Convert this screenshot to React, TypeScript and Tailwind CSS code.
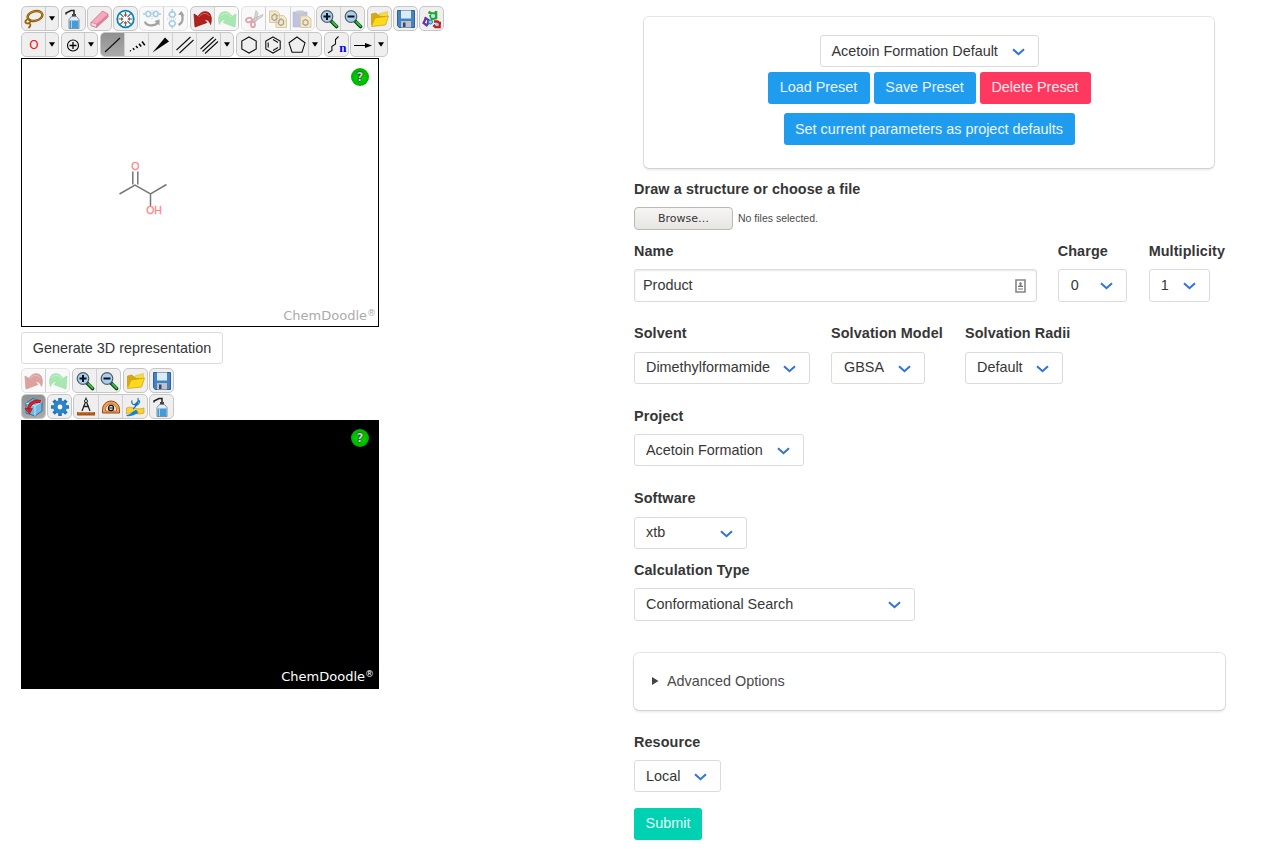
import type { ReactNode } from "react";

type Kids = { children?: ReactNode };

function Svg({ children, dim }: Kids & { dim?: boolean }) {
  return (
    <svg viewBox="0 0 20 20" width="20" height="20" fill="none" className={dim ? "opacity-40" : ""}>
      {children}
    </svg>
  );
}

const Lasso = () => (
  <Svg>
    <ellipse cx="11" cy="7" rx="7.500" ry="4.800" transform="rotate(-14 11 7)" stroke="#7a4a00" strokeWidth="2.300" />
    <ellipse cx="11" cy="7" rx="7.500" ry="4.800" transform="rotate(-14 11 7)" stroke="#c58a1c" strokeWidth="1" />
    <path d="M4.500 10c-4 1-4 4.500-1 4.500s4-3 1.500-4.500M5 14c2 1 2 3-.5 5" stroke="#9a620a" strokeWidth="1.800" />
  </Svg>
);
const Bottle = () => (
  <Svg>
    <path d="M2 5.500V4l5-2.500h3V6" stroke="#222" strokeWidth="1.500" />
    <path d="M8 5h4v2.500H8z" fill="#444" />
    <path d="M7.500 7.500h5l2.500 3v9H5v-9z" fill="#e4edf3" stroke="#667a88" strokeWidth=".8" />
    <path d="M5.500 11.500h9V19h-9z" fill="#459bd8" />
    <path d="M7.500 11.500V19" stroke="#a5d4f2" />
  </Svg>
);
const Eraser = () => (
  <Svg>
    <path d="M1 13.500 12.500 2 18 5v3L6.500 18.500 1 16.500z" fill="#f6a8bf" stroke="#c56680" strokeWidth=".7" />
    <path d="M6.500 15 18 5v3L6.500 18.500z" fill="#e27f9b" />
    <path d="M1 13.500 6.500 15v3.500L1 16.500z" fill="#f8d8e2" stroke="#c56680" strokeWidth=".5" />
  </Svg>
);
const Center = () => (
  <Svg>
    <circle cx="9.500" cy="10" r="8.300" stroke="#117fae" strokeWidth="1.700" fill="#f6fcfd" />
    <path d="M9.500 3v4M9.500 13v4M2.500 10h4M12.500 10h4" stroke="#278655" strokeWidth="1.200" />
    <path d="m4 4.500 3.500 3.500m4 4 3.500 3.500m0-11L11.500 8m-4 4L4 15.500" stroke="#27828c" strokeWidth="1.100" />
    <path d="M7.500 5.500 9.500 8l2-2.500zM7.500 14.500l2-2.500 2 2.500zM5 8l2.500 2L5 12zM14 8l-2.500 2 2.500 2z" fill="#d43b38" />
  </Svg>
);
const FlipH = () => (
  <Svg dim>
    <path d="m3.500 5 1.500-2.500h2.500L9 5 7.500 7.500H5zM11 5l1.500-2.500H15L16.500 5 15 7.500h-2.500zM1 5h2.500m13 0H19" stroke="#268bc5" strokeWidth="1.500" />
    <path d="M10 1v9" stroke="#777" strokeDasharray="1 1" />
    <path d="M3 12.500c1 4.500 9 5.500 13 1" stroke="#222" strokeWidth="2.200" />
    <path d="m12.500 12 5-1.500v6z" fill="#222" />
  </Svg>
);
const FlipV = () => (
  <Svg dim>
    <path d="M4.500 3h3.500l1.500 2.500L8 8H4.500L3 5.500zm0 9h3.500l1.500 2.500L8 17H4.500L3 14.500zM6.200 0v3m0 14v2.500" stroke="#268bc5" strokeWidth="1.500" />
    <path d="M1 10h10" stroke="#888" strokeDasharray="1 1" />
    <path d="M12.500 16c4.500-2 5-7 3-11.500" stroke="#222" strokeWidth="2.200" />
    <path d="m12 5.500 3.500-3.500 3 5z" fill="#222" />
  </Svg>
);
const Undo = ({ dim }: { dim?: boolean }) => (
  <Svg dim={dim}>
    <path d="M1 5 5 7.500C8 1.500 14.500 1.500 17 5c2 3.500 1.500 7.500.5 10.500-1-3.500-3.500-5.500-6-4.500l2.500 2.500L2 18z" fill="#b4201b" stroke="#7f100d" strokeWidth=".7" />
    <path d="M6 8c2-4 7.500-5 10.500-1" stroke="#df675b" />
  </Svg>
);
const Redo = () => (
  <Svg dim>
    <path d="M19 5 15 7.500C12 1.500 5.500 1.500 3 5c-2 3.500-1.500 7.500-.5 10.500 1-3.500 3.500-5.500 6-4.500L6 13.500 18 18z" fill="#2bcf42" stroke="#18aa35" strokeWidth=".7" />
    <path d="M14 8C12 4 6.500 3 3.500 7" stroke="#86e891" />
  </Svg>
);
const Cut = () => (
  <Svg dim>
    <path d="m12 1.500-2 9.500 2 1.500L14 4zM19 5.500 8 10.500l2 2.500 8-5z" fill="#aaa" stroke="#555" strokeWidth=".7" />
    <ellipse cx="5" cy="11" rx="3" ry="2.200" transform="rotate(-15 5 11)" stroke="#b52b45" strokeWidth="1.900" />
    <ellipse cx="9" cy="15.500" rx="2" ry="2.700" stroke="#b52b45" strokeWidth="1.900" />
  </Svg>
);
const Copy = () => (
  <Svg dim>
    <path d="M1.500 2h7l3 2.500v9h-10zM8 6.500h7.500l3 3v9H8z" fill="#f1ce68" stroke="#aa872f" />
    <path d="m4 7 2.500-2L9 6.500V10l-2.500 1.500L4 10zm6.500 5 2.500-2 2.500 1.500V15L13 16.500 10.500 15z" stroke="#222" strokeWidth="1.200" />
  </Svg>
);
const Paste = () => (
  <Svg dim>
    <path d="M1 3h14v15H1z" fill="#6970bd" stroke="#4c52a0" strokeWidth=".6" />
    <path d="M4.500 1.500h7V5h-7z" fill="#888" />
    <path d="M8.500 7H16l3 3v8.500H8.500z" fill="#f1ce68" stroke="#aa872f" />
    <path d="m11 12 2.500-1.500L16 12v3l-2.500 1.500L11 15z" stroke="#222" strokeWidth="1.200" />
  </Svg>
);
const Zoom = ({ plus }: { plus?: boolean }) => (
  <Svg>
    <path d="m12 12 5.500 5.500" stroke="#093e0d" strokeWidth="3.600" strokeLinecap="round" />
    <path d="m13.500 13 4 4" stroke="#31be43" strokeWidth="2" strokeLinecap="round" />
    <circle cx="8" cy="7.500" r="5.800" fill="#a8cfee" stroke="#555e66" strokeWidth="1.200" />
    <path d={plus ? "M4.500 7.500h7M8 4v7" : "M4.500 7.500h7"} stroke="#04101c" strokeWidth="2" />
  </Svg>
);
const Folder = () => (
  <Svg>
    <path d="M1.500 16V5L6 4l2 2h7v4" fill="#d7a90b" stroke="#b98d05" strokeWidth=".6" />
    <path d="M9.500 7V4.500l8-2V7" fill="#f5d94c" stroke="#d8ba45" strokeWidth=".5" />
    <path d="m1.500 17.500 3.500-8.500 13.500-2L15.500 16z" fill="#ffd91b" stroke="#c69c0a" strokeWidth=".7" />
  </Svg>
);
const Save = () => (
  <Svg>
    <path d="M1.500 1.500h17v17H3l-1.500-2z" fill="#4084c6" stroke="#244777" strokeWidth=".8" />
    <path d="M5 1.500h10v8H5z" fill="#dcecf4" />
    <path d="M5 12h10v6.500H5z" fill="#c2c2c2" />
    <path d="M7 13.500h2.500v4.500H7z" fill="#244b7b" />
  </Svg>
);
const Molecules = () => (
  <Svg>
    <path d="m6.500 3 3 1.500H14V2M14 4.500V9l-4 1-2-4" stroke="#24a82b" strokeWidth="2.600" />
    <path d="m2.500 8.500 4 2.500-1 5m-2-6-2 4 4 3" stroke="#6334ae" strokeWidth="2.200" />
    <path d="M12 12.500h3.500l2 2V18h-4l-2-2M17 14h2" stroke="#c51e22" strokeWidth="2.600" />
    <circle cx="11" cy="7" r="2" fill="#b7e6f6" /><circle cx="8.500" cy="13" r="2" fill="#8ed0ef" stroke="#1587bd" /><circle cx="15" cy="15.500" r="1.800" fill="#8ed0ef" />
  </Svg>
);
const Plus = () => (
  <Svg><circle cx="10" cy="10.500" r="5.500" stroke="#000" strokeWidth="1.100" /><path d="M10 7v7M6.500 10.500h7" stroke="#000" strokeWidth="1.300" /></Svg>
);
const Bond = () => <Svg><path d="M2 17 17 3" stroke="#111" strokeWidth="1.100" /></Svg>;
const Dashed = () => (
  <Svg><path d="m3 15.500.8.8m2.200-3 1.300 1.500m1.700-3.800 1.700 2m1.300-4.200 2.200 2.700m.8-5 2.800 3.800" stroke="#000" strokeWidth="1.500" /></Svg>
);
const Wedge = () => <Svg><path d="m1.500 17.500 12.500-15 4 4z" fill="#000" /></Svg>;
const Double = () => <Svg><path d="M1.500 15 15.500 2M4.500 18 18.500 5" stroke="#111" strokeWidth="1.100" /></Svg>;
const Triple = () => <Svg><path d="M1.500 14 14.500 2M3.500 16.500 17 4M6 18.500 19 6.500" stroke="#111" strokeWidth="1.100" /></Svg>;
const Hexagon = () => <Svg><path d="m10 2 7.200 4v8L10 18l-7.200-4V6z" stroke="#111" strokeWidth="1.100" /></Svg>;
const Benzene = () => (
  <Svg><path d="m10 2 7.200 4v8L10 18l-7.200-4V6zM10 4.600l5 2.800M15 12.600l-5 2.800M5.200 12.600V7.400" stroke="#111" strokeWidth="1.100" /></Svg>
);
const Pentagon = () => <Svg><path d="m10 2 8 5.800-3 9.400H5L2 7.800z" stroke="#111" strokeWidth="1.100" /></Svg>;
const Arrow = () => <Svg><path d="M1 10.500h12" stroke="#000" strokeWidth="1.200" /><path d="m12 8 7 2.500-7 2.500z" fill="#000" /></Svg>;
const Chain = () => (
  <span className="relative block h-5 w-5">
    <Svg><path d="m1 18 4-2.500-.2-4L8.500 9V4.500l3-3" stroke="#111" strokeWidth="1.100" /></Svg>
    <b className="absolute right-0 bottom-0 font-['Liberation_Serif',serif] text-[13px] leading-[14px] text-[#0000ff]">n</b>
  </span>
);
const Rotate = () => (
  <Svg>
    <path d="m2 6 7-4.500 9 3V14l-7 5-9-3z" fill="#73b8df" stroke="#2672a8" />
    <path d="m2 6 9 3 7-4.500M11 9v10" stroke="#bde6fa" />
    <path d="M4.500 13C5 7 9 3.500 16.500 4.500" stroke="#931319" strokeWidth="3.200" />
    <path d="M4.500 13C5 7 9 3.500 16.500 4.500" stroke="#e8191b" strokeWidth="2.200" />
    <path d="M1 11.500h7.500L5.500 17z" fill="#d91e22" stroke="#8d1418" strokeWidth=".5" />
  </Svg>
);
const Gear = () => (
  <Svg>
    <path d="M10 1v18M1 10h18M3.600 3.600l12.800 12.800m0-12.800L3.600 16.400" stroke="#2176ba" strokeWidth="3.600" />
    <circle cx="10" cy="10" r="6.800" fill="#2c83c5" />
    <circle cx="10" cy="10" r="2.400" fill="#fff" />
  </Svg>
);
const Compass = () => (
  <Svg>
    <path d="M10 .5V3M9.500 5 6 14m4.500-9L14 14M7 9.500h6" stroke="#222" strokeWidth="1.300" />
    <circle cx="10" cy="4" r="1.500" fill="#fff" stroke="#222" />
    <path d="M1 15h18v3.500H1z" fill="#a6551d" />
    <path d="M3 15v1.500m2-1.500v1m2-1v1.500m2-1.500v1m2-1v1.500m2-1.500v1m2-1v1.500m2-1.500v1" stroke="#ffcf68" strokeWidth=".7" />
  </Svg>
);
const Protractor = () => (
  <Svg>
    <path d="M1.500 16v-3.500a8.500 8.500 0 0 1 17 0V16z" fill="#eda15a" stroke="#974713" />
    <path d="M4.500 14v-1.500a5.500 5.500 0 0 1 11 0V14z" fill="#fff2d8" stroke="#974713" strokeWidth=".7" />
    <ellipse cx="10" cy="11" rx="2.600" ry="2.700" stroke="#111" strokeWidth="1.200" /><path d="M8 11h4" stroke="#111" />
  </Svg>
);
const Torsion = () => (
  <Svg>
    <path d="M1.500 11c5-3 8 3 17.500 0v5c-8 3-11-2-17.500 1z" fill="#ffd129" stroke="#b08a0d" strokeWidth=".5" />
    <path d="M1.500 18c4 0 7-5 10-5l2 3c-3 1-7 4-12 3z" fill="#1681cf" />
    <path d="M8 12c3-2 6-8 5-11M7 3.500c-1 4 2 5 4 3s4-4 3.500-1.500-3 3.500-5 3" stroke="#1673b8" strokeWidth="1.200" />
  </Svg>
);
const OxygenLabel = () => <span className="block pl-px font-['DejaVu_Sans',sans-serif] text-[12px] leading-[22px] text-[#ff0d0d]">O</span>;

function Caret() {
  return (
    <span className="flex h-full w-[13px] shrink-0 items-center justify-center border-l border-[#c9c9c9]">
      <svg width="6" height="5" viewBox="0 0 6 5"><path d="M0 .3h6L3 4.700z" fill="#000" /></svg>
    </span>
  );
}

type GroupProps = { icons: ReactNode[]; width: string; caret?: boolean; faded?: boolean; fadedRest?: boolean; active?: boolean };

function Group({ icons, width, caret, faded, fadedRest, active }: GroupProps) {
  return (
    <div className={`flex h-[25px] shrink-0 overflow-hidden rounded-[5px] border ${faded ? "border-[#e3e3e3] bg-[#f9f9f9]" : "border-[#c6c6c6] bg-[#efefef]"} ${width}`}>
      {icons.map((icon, i) => (
        <span
          key={i}
          className={`flex h-full min-w-0 flex-1 items-center justify-center ${i ? "border-l border-[#d0d0d0]" : ""} ${fadedRest && i ? "bg-[#f9f9f9]" : ""} ${active && i === 0 ? "bg-linear-to-b from-[#909090] to-[#ababab]" : ""}`}
        >
          <span className="-mx-1 shrink-0">{icon}</span>
        </span>
      ))}
      {caret && <Caret />}
    </div>
  );
}

function Help({ className }: { className: string }) {
  return (
    <span className={`absolute top-[9px] flex h-[18px] w-[18px] items-center justify-center rounded-full bg-radial from-[#00f000] to-[#009400] font-['DejaVu_Sans',sans-serif] text-[12px] font-bold text-[#d0d0d0] [text-shadow:0_0_1px_#000,0_0_2px_#000] ${className}`}>
      ?
    </span>
  );
}

function Brand({ className }: { className: string }) {
  return (
    <span className={`absolute font-['DejaVu_Sans',sans-serif] text-[13px] leading-4 ${className}`}>
      ChemDoodle<span className="relative -top-[4px] text-[9px]">®</span>
    </span>
  );
}

function Sketch() {
  return (
    <svg width="100" height="80" viewBox="100 150 100 80" className="absolute top-[91px] left-[78px]">
      <path d="M119.500 194 135 185l15.500 9 16-9.500M150.500 194v12M132.800 184.500v-13m5 13v-13" stroke="#777" strokeWidth="1.500" fill="none" />
      <g fill="#ff8585" fontFamily="Liberation Sans, sans-serif" fontSize="10.500" stroke="#ff8585" strokeWidth=".3">
        <text x="131.200" y="170">O</text>
        <text x="146.200" y="214.300">OH</text>
      </g>
    </svg>
  );
}

function Label({ children, className = "" }: Kids & { className?: string }) {
  return <div className={`h-[22px] text-[14.400px] leading-[22px] font-bold tracking-[0.1px] whitespace-nowrap text-[#363636] ${className}`}>{children}</div>;
}

function Select({ children, className, raised }: Kids & { className: string; raised?: boolean }) {
  return (
    <div className={`flex shrink-0 items-center justify-between rounded-[3px] border border-[#dbdbdb] bg-white pr-[13px] pl-[11px] text-[14.400px] leading-[22px] whitespace-nowrap text-[#363636] ${className}`}>
      <span className={raised ? "pb-0.5" : ""}>{children}</span>
      <svg width="13" height="8" viewBox="0 0 13 8" className="relative top-[0.500px]"><path d="m1 1.200 5.500 5 5.500-5" fill="none" stroke="#3273dc" strokeWidth="2.100" /></svg>
    </div>
  );
}

function Button({ children, className }: Kids & { className: string }) {
  return (
    <button className={`h-8 shrink-0 rounded-[3px] text-[14.400px] leading-[30px] whitespace-nowrap ${className}`}>{children}</button>
  );
}

const box = "rounded-[5px] bg-white shadow-[0_2px_3px_rgba(10,10,10,0.1),0_0_0_1px_rgba(10,10,10,0.1)]";
const blue = "bg-[#209cee] text-white/90";

export default function App() {
  return (
    <div className="flex h-[864px] w-[1275px] overflow-hidden bg-white font-['Liberation_Sans',Arial,sans-serif]">
      <section className="w-[634px] shrink-0 pt-1.5 pl-[21px]">
        <div className="flex">
          <Group icons={[<Lasso />]} width="w-[38px] mr-0.5" caret />
          <Group icons={[<Bottle />]} width="w-[25px] mr-px" />
          <Group icons={[<Eraser />]} width="w-[25px] mr-px" />
          <Group icons={[<Center />]} width="w-[25px] mr-px" />
          <Group icons={[<FlipH />, <FlipV />]} width="w-[49px] mr-0.5" faded />
          <Group icons={[<Undo />, <Redo />]} width="w-[49px] mr-0.5" fadedRest />
          <Group icons={[<Cut />, <Copy />, <Paste />]} width="w-[74px] mr-px" faded />
          <Group icons={[<Zoom plus />, <Zoom />]} width="w-[49px] mr-0.5" />
          <Group icons={[<Folder />]} width="w-[25px] mr-px" />
          <Group icons={[<Save />]} width="w-[25px] mr-px" />
          <Group icons={[<Molecules />]} width="w-[25px]" />
        </div>
        <div className="mt-px flex">
          <Group icons={[<OxygenLabel />]} width="w-[38px] mr-0.5" caret />
          <Group icons={[<Plus />]} width="w-[37px] mr-0.5" caret />
          <Group icons={[<Bond />, <Dashed />, <Wedge />, <Double />, <Triple />]} width="w-[134px] mr-0.5" caret active />
          <Group icons={[<Hexagon />, <Benzene />, <Pentagon />]} width="w-[86px] mr-0.5" caret />
          <Group icons={[<Chain />]} width="w-[25px] mr-px" />
          <Group icons={[<Arrow />]} width="w-[38px]" caret />
        </div>
        <div className="relative mt-px h-[269px] w-[358px] border border-black bg-white">
          <Sketch />
          <Help className="left-[329px]" />
          <Brand className="right-[2px] bottom-px text-[#ababab]" />
        </div>
        <Button className="mt-[5px] block w-[202px] border border-[#dbdbdb] bg-white pb-0.5 leading-[28px] text-[#363636]">Generate 3D representation</Button>
        <div className="mt-1 flex">
          <Group icons={[<Undo dim />, <Redo />]} width="w-[49px] mr-0.5" faded />
          <Group icons={[<Zoom plus />, <Zoom />]} width="w-[49px] mr-0.5" />
          <Group icons={[<Folder />]} width="w-[25px] mr-px" />
          <Group icons={[<Save />]} width="w-[25px]" />
        </div>
        <div className="mt-px flex">
          <Group icons={[<Rotate />]} width="w-[25px] mr-px" active />
          <Group icons={[<Gear />]} width="w-[25px] mr-px" />
          <Group icons={[<Compass />, <Protractor />, <Torsion />]} width="w-[75px] mr-px" />
          <Group icons={[<Bottle />]} width="w-[25px]" />
        </div>
        <div className="relative mt-px h-[269px] w-[358px] bg-black">
          <Help className="left-[330px]" />
          <Brand className="right-[5px] bottom-[3px] text-white" />
        </div>
      </section>

      <section className="w-[591px] shrink-0 pt-[17px]">
        <div className={`ml-2.5 flex h-[151px] w-[570px] flex-col items-center pt-[18px] ${box}`}>
          <Select className="h-8 w-[219px]">Acetoin Formation Default</Select>
          <div className="mt-[5px] flex gap-1">
            <Button className={`w-[102px] pb-0.5 ${blue}`}>Load Preset</Button>
            <Button className={`w-[102px] pb-0.5 ${blue}`}>Save Preset</Button>
            <Button className="w-[111px] bg-[#ff3860] pb-0.5 text-white/90">Delete Preset</Button>
          </div>
          <Button className={`mt-[9px] w-[291px] leading-8 ${blue}`}>Set current parameters as project defaults</Button>
        </div>

        <Label className="mt-2.5">Draw a structure or choose a file</Label>
        <div className="mt-[7px] flex h-[23px] items-center">
          <button className="h-[23px] w-[99px] rounded-[4px] border border-[#bfb8b1] bg-linear-to-b from-[#f6f5f4] to-[#e8e6e4] pt-px font-['DejaVu_Sans',sans-serif] text-[11px] leading-5 text-[#363636]">Browse…</button>
          <span className="ml-[5px] text-[10.500px] text-[#4a4a4a]">No files selected.</span>
        </div>

        <div className="mt-2.5 flex">
          <div className="w-[424px]">
            <Label>Name</Label>
            <div className="mt-[7px] flex h-[33px] w-[403px] items-center justify-between rounded-[3px] border border-[#dbdbdb] pr-[10px] pl-2 text-[14.400px] text-[#363636] shadow-[inset_0_1px_2px_rgba(10,10,10,0.1)]">
              <span>Product</span>
              <svg width="11" height="14" viewBox="0 0 11 14">
                <path d="M1 1h9v12H1z" fill="#fff" stroke="#858585" strokeWidth="1.600" />
                <circle cx="5.500" cy="4.500" r="1.200" fill="#777" />
                <path d="M3 8V6.700h1.500V5.500h2v1.200H8V8zM3 9.500h5v1H3z" fill="#777" />
              </svg>
            </div>
          </div>
          <div className="w-[91px]">
            <Label>Charge</Label>
            <Select raised className="mt-[7px] h-[33px] w-[69px]"><span className="ml-px">0</span></Select>
          </div>
          <div>
            <Label>Multiplicity</Label>
            <Select raised className="mt-[7px] h-[33px] w-[61px]">1</Select>
          </div>
        </div>

        <div className="mt-5 flex">
          <div className="w-[197px]">
            <Label>Solvent</Label>
            <Select raised className="mt-2 h-8 w-[176px]">Dimethylformamide</Select>
          </div>
          <div className="w-[134px]">
            <Label>Solvation Model</Label>
            <Select raised className="mt-2 h-8 w-[94px]"><span className="ml-px">GBSA</span></Select>
          </div>
          <div>
            <Label>Solvation Radii</Label>
            <Select raised className="mt-2 h-8 w-[98px]">Default</Select>
          </div>
        </div>

        <Label className="mt-[21px]">Project</Label>
        <Select className="mt-[7px] h-8 w-[170px]">Acetoin Formation</Select>
        <Label className="mt-[21px]">Software</Label>
        <Select raised className="mt-2 h-8 w-[113px]">xtb</Select>
        <Label className="mt-2.5">Calculation Type</Label>
        <Select raised className="mt-[7px] h-[33px] w-[281px]">Conformational Search</Select>

        <div className={`mt-8 flex h-[57px] items-center pl-[18px] text-[14.400px] text-[#4a4a4a] ${box}`}>
          <svg width="7" height="8" viewBox="0 0 7 8" className="relative -top-px"><path d="M0 0v8l6.500-4z" fill="#444" /></svg>
          <span className="ml-2">Advanced Options</span>
        </div>

        <Label className="mt-[21px]">Resource</Label>
        <Select className="mt-[7px] h-8 w-[87px]">Local</Select>
        <Button className="mt-4 block w-[68px] bg-[#00d1b2] pb-0.5 text-white/90">Submit</Button>
      </section>
    </div>
  );
}
